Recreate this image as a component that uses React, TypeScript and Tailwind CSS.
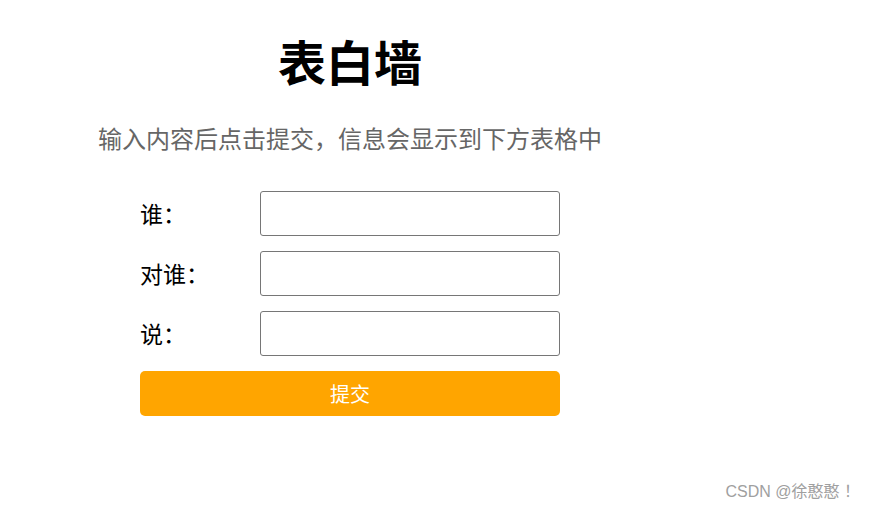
import React from "react";

export default function App() {
  return (
    <div className="relative w-[870px] h-[510px] bg-white overflow-hidden font-['Noto_Sans_CJK_SC',sans-serif]">
      <div className="w-[700px] flex flex-col items-center pt-[36px]">
        <h1 className="text-[48px] leading-[48px] font-bold text-black">表白墙</h1>
        <p className="mt-[42px] text-[24px] leading-[24px] text-[#666666] whitespace-nowrap">
          输入内容后点击提交，信息会显示到下方表格中
        </p>
        <div className="mt-[41px] w-[420px] flex flex-col gap-[15px]">
          <div className="flex items-center h-[45px]">
            <span className="w-[120px] text-[23px] text-black">谁：</span>
            <input className="w-[300px] h-[45px] border border-[#767676] rounded-[3px] outline-none" />
          </div>
          <div className="flex items-center h-[45px]">
            <span className="w-[120px] text-[23px] text-black">对谁：</span>
            <input className="w-[300px] h-[45px] border border-[#767676] rounded-[3px] outline-none" />
          </div>
          <div className="flex items-center h-[45px]">
            <span className="w-[120px] text-[23px] text-black">说：</span>
            <input className="w-[300px] h-[45px] border border-[#767676] rounded-[3px] outline-none" />
          </div>
          <button className="w-[420px] h-[45px] bg-[#ffa500] rounded-[5px] text-white text-[20px] leading-[45px]">
            提交
          </button>
        </div>
      </div>
      <div className="absolute right-[10px] bottom-[8px] text-[16px] text-[#a0a0a0] leading-[20px] font-['Liberation_Sans','Noto_Sans_CJK_SC',sans-serif]">
        CSDN @徐憨憨 ！
      </div>
    </div>
  );
}
